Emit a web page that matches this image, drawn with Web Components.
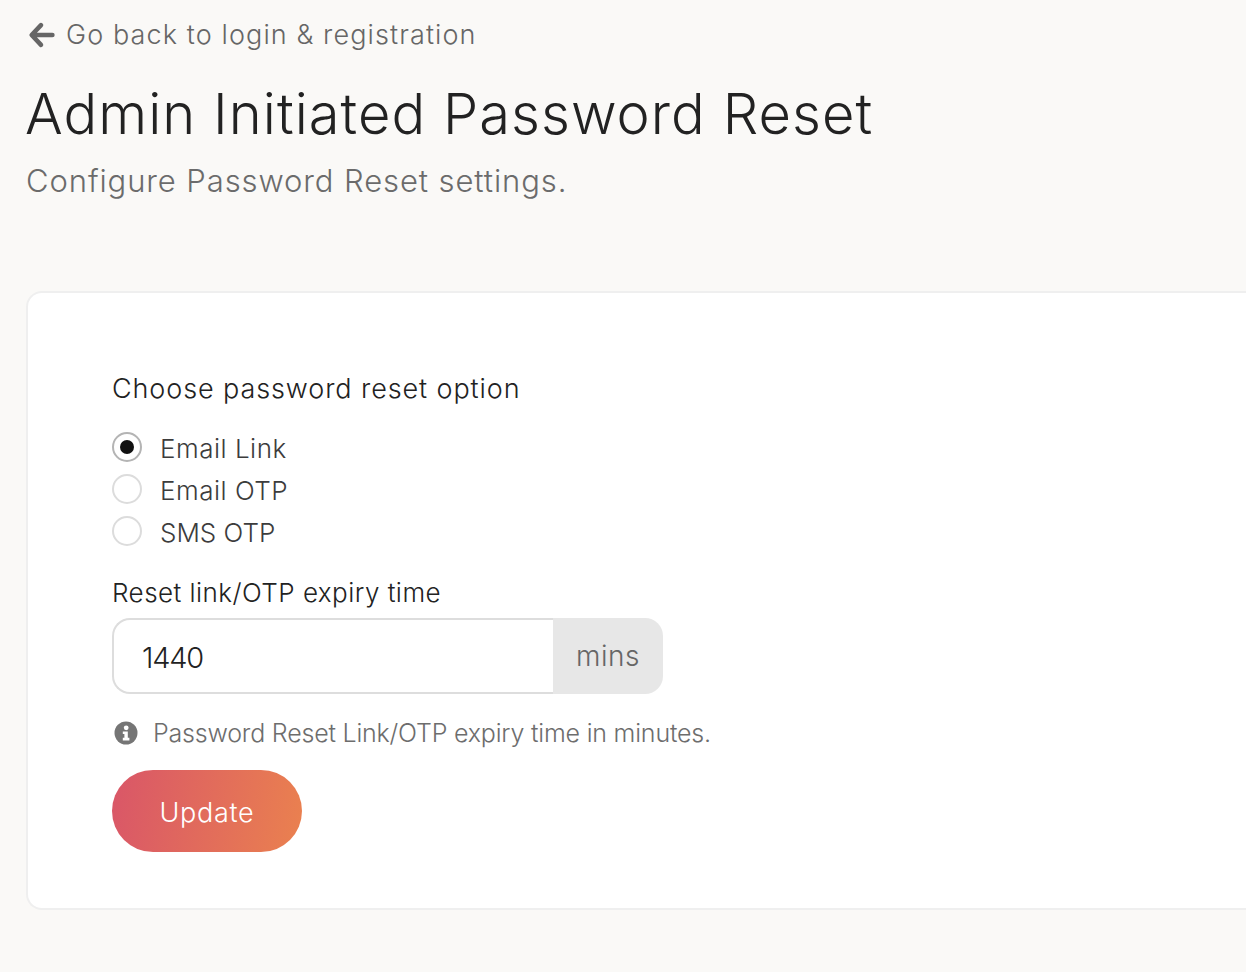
<!doctype html>
<html><head><meta charset="utf-8"><style>
html,body{margin:0;padding:0;background:#faf9f7;height:972px;overflow:hidden}
body{font-family:Inter,"Liberation Sans",sans-serif;font-weight:300}
</style></head><body>
<template id="t-radio"><style>
:host{display:flex;align-items:center;gap:18px;height:42px;font-size:26px;color:#3c3c3c;letter-spacing:.5px}
:host([narrow]){letter-spacing:0}
.r{width:30px;height:30px;box-sizing:border-box;border-radius:50%;border:2px solid #dcdcdc;background:#fff;display:flex;align-items:center;justify-content:center;flex:none}
:host([checked]) .r{border-color:#b4b4b4}
:host([checked]) .r::after{content:"";width:14px;height:14px;border-radius:50%;background:#111}
.t{padding-top:2px}
</style><span class="r"></span><span class="t"><slot></slot></span></template>
<script>
const tpl=(html)=>{const t=document.createElement('template');t.innerHTML=html;return t};
const def=(name,html)=>customElements.define(name,class extends HTMLElement{constructor(){super();this.attachShadow({mode:'open'}).appendChild(tpl(html).content.cloneNode(true))}});
customElements.define('reset-radio',class extends HTMLElement{constructor(){super();this.attachShadow({mode:'open'}).appendChild(document.getElementById('t-radio').content.cloneNode(true))}});
def('page-header',`<style>
:host{display:block;padding:15px 0 0 26px}
a{display:flex;align-items:center;gap:12px;font-size:27px;line-height:40px;color:#666;letter-spacing:1.1px;margin-left:1px}
svg{width:28px;height:28px;flex:none;margin-right:-1px}
h1{margin:20px 0 0;font-size:56px;font-weight:300;line-height:78px;color:#222;letter-spacing:1.05px;margin-left:-1px}
p{margin:7px 0 0;font-size:31px;line-height:42px;color:#6b6b6b;letter-spacing:.9px}
</style><a><svg viewBox="0 0 27 27"><path d="M24.5 13.5H6M13.5 4 4.5 13.5 13.5 23" fill="none" stroke="#666" stroke-width="4.4" stroke-linecap="round" stroke-linejoin="round"/></svg><span>Go back to login &amp; registration</span></a>
<h1>Admin Initiated Password Reset</h1><p>Configure Password Reset settings.</p>`);
def('form-card',`<style>
:host{display:block;margin:89px 0 0 26px;height:619px;box-sizing:border-box;background:#fff;border:2px solid #efefef;border-right:0;border-radius:16px 0 0 16px;padding:78px 0 0 84px}
</style><slot></slot>`);
def('reset-form',`<style>
:host{display:block;color:#222}
.l{font-size:27px;line-height:36px;color:#222;letter-spacing:.9px}
.opts{margin-top:19px;display:flex;flex-direction:column}
.l2{margin-top:23px;font-size:26px;line-height:36px;color:#222;letter-spacing:.46px}
.group{margin-top:7px;display:flex;width:551px;height:76px}
.input{flex:1;box-sizing:border-box;border:2px solid #ddd;border-right:0;border-radius:18px 0 0 18px;background:#fff;padding:2px 0 0 28px;display:flex;align-items:center;font-size:29px;color:#222;letter-spacing:-1.2px}
.addon{width:110px;background:#e7e7e7;border-radius:0 18px 18px 0;display:flex;align-items:center;justify-content:center;font-size:28px;color:#666;letter-spacing:.5px}
.hint{margin-top:24px;display:flex;align-items:center;gap:15px;font-size:25px;line-height:30px;color:#6d6d6d;padding-left:2px;letter-spacing:-.2px}
.hint svg{width:24px;height:24px;flex:none}
button{margin-top:22px;display:block;width:190px;height:82px;border:0;border-radius:41px;background:linear-gradient(100deg,#d95668,#ea814f);color:#fff;font:inherit;font-size:27px;letter-spacing:.7px;padding:2px 0 0}
</style>
<div class="l">Choose password reset option</div>
<div class="opts"><reset-radio checked>Email Link</reset-radio><reset-radio>Email OTP</reset-radio><reset-radio narrow>SMS OTP</reset-radio></div>
<div class="l2">Reset link/OTP expiry time</div>
<div class="group"><div class="input">1440</div><div class="addon">mins</div></div>
<div class="hint"><svg viewBox="0 0 24 24"><circle cx="12" cy="12" r="11.5" fill="#757575"/><circle cx="12.2" cy="6.8" r="2.4" fill="#fff"/><path d="M8.8 10.4h5v6.4h1.6v2.6H8.8v-2.6h1.6v-3.8H8.8z" fill="#fff"/></svg><span>Password Reset Link/OTP expiry time in minutes.</span></div>
<button>Update</button>`);
</script>
<page-header></page-header>
<form-card><reset-form></reset-form></form-card>
</body></html>
